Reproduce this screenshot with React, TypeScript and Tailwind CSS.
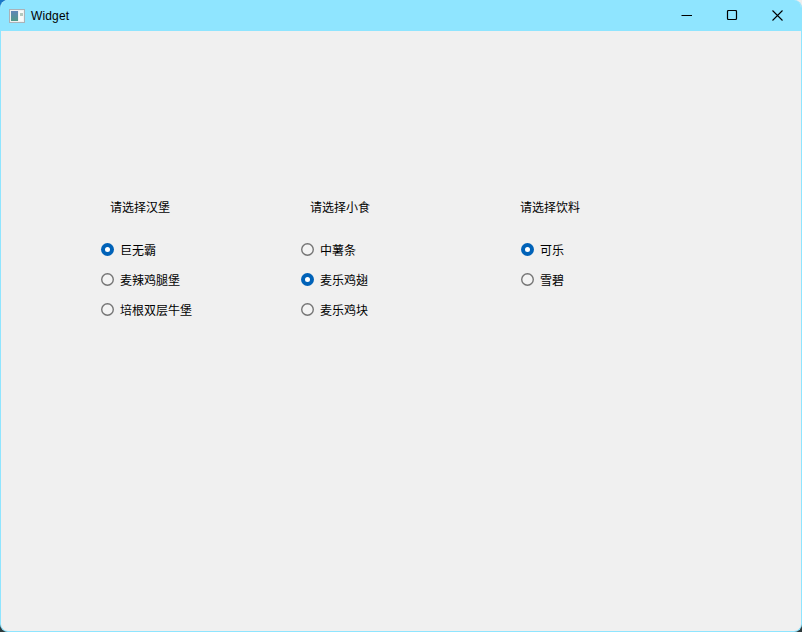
const columns = [
  { title: "请选择汉堡", width: "w-[200px]", heading: "pl-[9px]", options: [["巨无霸", true], ["麦辣鸡腿堡", false], ["培根双层牛堡", false]] },
  { title: "请选择小食", width: "w-[220px]", heading: "pl-[9px]", options: [["中薯条", false], ["麦乐鸡翅", true], ["麦乐鸡块", false]] },
  { title: "请选择饮料", width: "w-[200px]", heading: "-ml-px", options: [["可乐", true], ["雪碧", false]] },
] as const;

function Radio({ checked }: { checked: boolean }) {
  return checked ? (
    <span className="mb-[2px] flex h-[13px] w-[13px] items-center justify-center rounded-full bg-[#0062b8]">
      <span className="h-[5px] w-[5px] rounded-full bg-white" />
    </span>
  ) : (
    <span className="mb-[2px] h-[13px] w-[13px] rounded-full bg-[#f4f4f4] shadow-[inset_0_0_0_1.4px_#757575]" />
  );
}

function AppIcon() {
  return (
    <svg width="16" height="16" viewBox="0 0 16 16" aria-hidden="true">
      <defs>
        <linearGradient id="pane" x1="0" y1="0" x2="0" y2="1">
          <stop offset="0" stopColor="#5f86b8" />
          <stop offset="1" stopColor="#4f9a88" />
        </linearGradient>
      </defs>
      <rect x="0.5" y="1.5" width="15" height="13" fill="#eef2f2" stroke="#aab2b8" />
      <rect x="2" y="3" width="7" height="10" fill="url(#pane)" />
      <rect x="10" y="3" width="4" height="10" fill="#f8fafa" />
      <rect x="11" y="5" width="3" height="3" fill="#b4c8be" />
    </svg>
  );
}

export default function App() {
  return (
    <div className="h-[632px] w-[802px] overflow-hidden bg-[conic-gradient(#eeeeee_0_25%,#2e3a3c_25%_75%,#1a78c8_75%_100%)] font-['Noto_Sans_CJK_SC','Liberation_Sans',sans-serif] text-black">
      <div className="flex h-full w-full flex-col overflow-hidden rounded-[8px] border-x border-b border-[#8fe5ff] bg-[#f0f0f0]">
        <header className="-mx-px flex h-[31px] shrink-0 items-center justify-between bg-[#8fe5ff]">
          <div className="flex items-center gap-[6px] pl-[9px]">
            <AppIcon />
            <span className="font-['Liberation_Sans',sans-serif] text-[12px] tracking-[0.15px]">Widget</span>
          </div>
          <div className="flex h-full items-center pr-px">
            <div className="flex h-full w-[46px] items-center justify-center">
              <svg width="12" height="12" viewBox="0 0 12 12" fill="none" stroke="#000" aria-hidden="true"><path d="M1.5 5.5h10.5" /></svg>
            </div>
            <div className="flex h-full w-[46px] items-center justify-center">
              <svg width="12" height="12" viewBox="0 0 12 12" fill="none" stroke="#000" strokeWidth="1.2" aria-hidden="true"><rect x="1.5" y="0.5" width="9" height="9" rx="1" /></svg>
            </div>
            <div className="flex h-full w-[46px] items-center justify-center">
              <svg width="12" height="12" viewBox="0 0 12 12" fill="none" stroke="#000" strokeWidth="1.1" aria-hidden="true"><path d="M0.5 0.5l10 10M10.5 0.5L0.5 10.5" /></svg>
            </div>
          </div>
        </header>
        <main className="flex pl-[100px] pt-[166px]">
          {columns.map((col) => (
            <section key={col.title} className={col.width}>
              <h2 className={`h-[20px] ${col.heading} text-[12px] leading-[20px] font-normal`}>{col.title}</h2>
              <ul className="mt-[23px] flex flex-col gap-[10px]">
                {col.options.map(([label, checked]) => (
                  <li key={label} className="flex h-[20px] items-center gap-[6px] text-[12px]">
                    <Radio checked={checked} />
                    <span>{label}</span>
                  </li>
                ))}
              </ul>
            </section>
          ))}
        </main>
      </div>
    </div>
  );
}
